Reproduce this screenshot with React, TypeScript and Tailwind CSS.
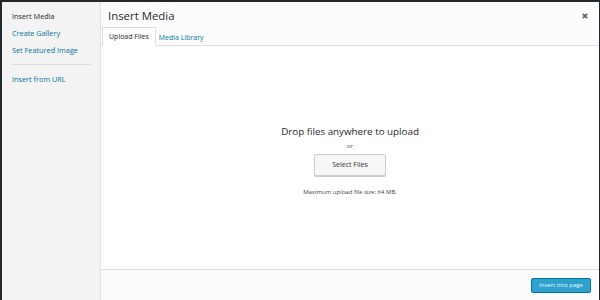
export default function App() {
  const font = "font-['Open_Sans',_'Liberation_Sans',_sans-serif]";

  return (
    <div className={`flex h-[300px] w-[600px] bg-[#23282d] pl-[2px] pr-[1px] pt-[2px] ${font}`}>
      {/* sidebar */}
      <aside className="flex w-[99px] shrink-0 flex-col border-r border-[#e2e2e2] bg-[#f3f3f3] pl-[10px] pt-[6px]">
        <div className="text-[7.3px] leading-[17px] text-[#23282d]">Insert Media</div>
        <a className="text-[7.3px] leading-[17px] text-[#0074a2]">Create Gallery</a>
        <a className="text-[7.3px] leading-[17px] text-[#0074a2]">Set Featured Image</a>
        <div className="mr-[9px] mt-[5px] h-px bg-[#dddddd]" />
        <a className="mt-[6px] text-[7.3px] leading-[17px] text-[#0074a2]">Insert from URL</a>
      </aside>

      {/* main */}
      <main className="flex flex-1 flex-col bg-white">
        <header className="flex flex-col border-b border-[#dddddd] bg-[#fcfcfc]">
          <div className="flex items-start justify-between">
            <h1 className="ml-[7px] mt-[7px] text-[11.4px] leading-[14px] text-[#23282d]">Insert Media</h1>
            <button className="mr-[11px] mt-[11px] text-[#666666]">
              <svg width="6" height="6" viewBox="0 0 6 6">
                <path d="M0.8 0.8 L5.2 5.2 M5.2 0.8 L0.8 5.2" stroke="currentColor" strokeWidth="1.8" />
              </svg>
            </button>
          </div>
          <div className="-mb-px mt-[4px] flex items-end gap-[2px] pl-[1px]">
            <div className="border border-b-white border-[#dddddd] bg-white px-[6px] text-[7px] leading-[17px] text-[#23282d]">
              Upload Files
            </div>
            <div className="px-[1px] text-[7px] leading-[17px] text-[#0074a2]">Media Library</div>
          </div>
        </header>

        <section className="flex flex-1 flex-col items-center pt-[79px]">
          <p className="text-[9.8px] leading-[14px] text-[#23282d]">Drop files anywhere to upload</p>
          <p className="mt-[3px] text-[6px] leading-[8px] text-[#555555]">or</p>
          <button className="mt-[4px] h-[22px] w-[72px] rounded-[2px] border border-[#cccccc] bg-[#f7f7f7] text-[7px] text-[#333333] shadow-[0_1px_0_#ccc]">
            Select Files
          </button>
          <p className="mt-[12px] text-[6px] leading-[8px] text-[#444444]">Maximum upload file size: 64 MB.</p>
        </section>

        <footer className="flex h-[31px] shrink-0 items-start justify-end border-t border-[#dddddd] bg-[#fcfcfc] pr-[8px] pt-[8px]">
          <button className="h-[15px] w-[60px] rounded-[2px] border border-[#0074a2] bg-[#2ea2cc] text-[6px] text-[#e8f4fa]">
            Insert into page
          </button>
        </footer>
      </main>
    </div>
  );
}
